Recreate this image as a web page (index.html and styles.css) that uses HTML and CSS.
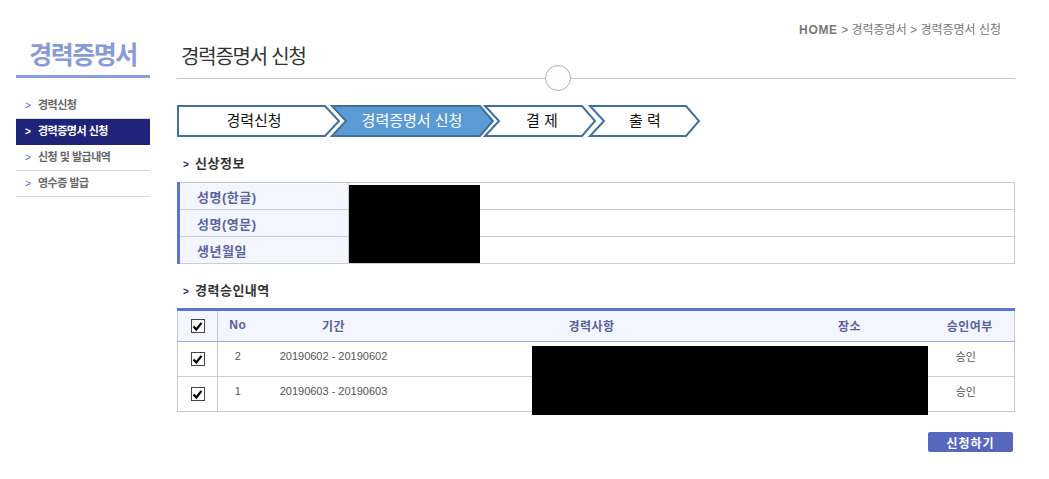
FILE: index.html
```html
<!DOCTYPE html>
<html lang="ko">
<head>
    <meta charset="UTF-8">
    <title>경력증명서 신청</title>
    <link rel="stylesheet" href="styles.css">
</head>
<body>
<div class="wrap">
    <!-- left menu -->
    <div class="side">
        <div class="side-title">경력증명서</div>
        <ul class="side-menu">
            <li><span class="arr">&gt;</span>경력신청</li>
            <li class="on"><span class="arr">&gt;</span>경력증명서 신청</li>
            <li><span class="arr">&gt;</span>신청 및 발급내역</li>
            <li><span class="arr">&gt;</span>영수증 발급</li>
        </ul>
    </div>

    <div class="main">
        <div class="location"><b>HOME</b> &gt; 경력증명서 &gt; 경력증명서 신청</div>
        <div class="page-title">
            경력증명서 신청
            <span class="circle"></span>
        </div>

        <svg class="steps" width="530" height="34" viewBox="0 0 530 34">
            <g stroke="#41709f" stroke-width="2" stroke-linejoin="miter">
                <polygon points="1,2 148,2 162,17 148,32 1,32" fill="#fff"/>
                <polygon points="155,2 303,2 316,17 303,32 155,32 169,17" fill="#5b9bd5"/>
                <polygon points="308,2 405,2 418,17 405,32 308,32 322,17" fill="#fff"/>
                <polygon points="413,2 509,2 522,17 509,32 413,32 427,17" fill="#fff"/>
            </g>
            <g class="step-txt" text-anchor="middle">
                <text x="77" y="22">경력신청</text>
                <text x="235" y="22" fill="#fff">경력증명서 신청</text>
                <text x="365" y="22">결 제</text>
                <text x="468" y="22">출 력</text>
            </g>
        </svg>

        <h3 class="sub"><span class="arr">&gt;</span>신상정보</h3>
        <div class="box">
            <table class="info">
                <tr><th>성명(한글)</th><td></td></tr>
                <tr><th>성명(영문)</th><td></td></tr>
                <tr><th>생년월일</th><td></td></tr>
            </table>
            <div class="mask mask1"></div>
        </div>

        <h3 class="sub sub2"><span class="arr">&gt;</span>경력승인내역</h3>
        <div class="box">
            <table class="list">
                <colgroup>
                    <col style="width:40px">
                    <col style="width:40px">
                    <col style="width:152px">
                    <col style="width:364px">
                    <col style="width:152px">
                    <col>
                </colgroup>
                <thead>
                    <tr>
                        <th class="cb"><span class="chk"><svg width="11" height="11" viewBox="0 0 11 11"><path d="M1.5 5.5 L4.3 8.5 L9.5 1.8" fill="none" stroke="#000" stroke-width="2.2"/></svg></span></th>
                        <th>No</th>
                        <th>기간</th>
                        <th>경력사항</th>
                        <th>장소</th>
                        <th>승인여부</th>
                    </tr>
                </thead>
                <tbody>
                    <tr>
                        <td class="cb"><span class="chk"><svg width="11" height="11" viewBox="0 0 11 11"><path d="M1.5 5.5 L4.3 8.5 L9.5 1.8" fill="none" stroke="#000" stroke-width="2.2"/></svg></span></td>
                        <td>2</td>
                        <td>20190602 - 20190602</td>
                        <td></td>
                        <td></td>
                        <td class="ok">승인</td>
                    </tr>
                    <tr>
                        <td class="cb"><span class="chk"><svg width="11" height="11" viewBox="0 0 11 11"><path d="M1.5 5.5 L4.3 8.5 L9.5 1.8" fill="none" stroke="#000" stroke-width="2.2"/></svg></span></td>
                        <td>1</td>
                        <td>20190603 - 20190603</td>
                        <td></td>
                        <td></td>
                        <td class="ok">승인</td>
                    </tr>
                </tbody>
            </table>
            <div class="mask mask2"></div>
        </div>

        <div class="btns">
            <button type="button" class="btn">신청하기</button>
        </div>
    </div>
</div>
</body>
</html>
```

FILE: styles.css
```css
body {
    margin: 0;
    background: #fff;
    font-family: "Liberation Sans", "Noto Sans CJK KR", sans-serif;
    color: #555;
}

.wrap {
    display: flex;
    padding-left: 16px;
}

/* left menu */
.side {
    width: 134px;
    padding-top: 38px;
}

.side-title {
    text-align: center;
    font-size: 25px;
    font-weight: bold;
    letter-spacing: -1.5px;
    color: #8a9ad9;
    line-height: 34px;
    padding-bottom: 3px;
    border-bottom: 3px solid #8c9ddc;
}

.side-menu {
    list-style: none;
    margin: 15px 0 0;
    padding: 0;
}

.side-menu li {
    height: 25px;
    line-height: 25px;
    border-bottom: 1px solid #d9d9d9;
    font-size: 11px;
    font-weight: bold;
    letter-spacing: -0.5px;
    color: #666;
    padding-left: 9px;
}

.side-menu li .arr {
    display: inline-block;
    width: 13px;
    color: #5c6bb8;
    font-size: 10px;
    font-weight: normal;
}

.side-menu li.on {
    background: #1f2478;
    color: #fff;
    border-bottom-color: #1f2478;
}

.side-menu li.on .arr {
    color: #fff;
    font-weight: bold;
}

/* main */
.main {
    width: 838px;
    margin-left: 27px;
}

.location {
    margin-top: 20px;
    height: 20px;
    line-height: 20px;
    text-align: right;
    padding-right: 14px;
    font-size: 12px;
    color: #777;
}

.location b {
    color: #777;
    letter-spacing: 0.7px;
}

.page-title {
    position: relative;
    padding: 5px 0 9px 4px;
    line-height: 24px;
    font-size: 20px;
    letter-spacing: -1.2px;
    color: #333;
    border-bottom: 1px solid #c8c8c8;
}

.circle {
    position: absolute;
    left: 368px;
    top: 25px;
    width: 24px;
    height: 24px;
    border: 1.5px solid #aeaecb;
    border-radius: 50%;
    background: #fff;
}

.steps {
    display: block;
    margin-top: 25px;
}

.step-txt {
    font-family: "Noto Sans CJK KR", sans-serif;
    font-size: 15px;
    fill: #111;
}

.sub {
    margin: 16px 0 0;
    height: 20px;
    line-height: 20px;
    font-size: 13px;
    color: #333;
    padding-left: 6px;
    letter-spacing: 0.5px;
}

.sub .arr {
    display: inline-block;
    width: 12px;
    font-size: 10px;
    color: #1f2478;
}

.sub2 {
    margin-top: 17px;
}

.box {
    position: relative;
    margin-top: 8px;
}

.mask {
    position: absolute;
    background: #000;
}

.mask1 {
    left: 172px;
    top: 3px;
    width: 131px;
    height: 78px;
}

.mask2 {
    left: 355px;
    top: 38px;
    width: 396px;
    height: 69px;
}

table {
    width: 100%;
    border-collapse: collapse;
}

.info {
    border-top: 1px solid #ccc;
    border-right: 1px solid #ccc;
}

.info th {
    width: 151px;
    height: 26px;
    padding: 0 0 0 17px;
    text-align: left;
    background: #f3f6fe;
    border-left: 3px solid #5c74d8;
    border-bottom: 1px solid #ccc;
    font-size: 13px;
    color: #5a64a0;
    letter-spacing: 0.5px;
}

.info td {
    border-left: 1px solid #ccc;
    border-bottom: 1px solid #ccc;
}

.list {
    margin-top: -1px;
    table-layout: fixed;
    border-top: 3px solid #5b74d6;
    border-left: 1px solid #ccc;
    border-right: 1px solid #ccc;
}

.list th {
    height: 28px;
    background: #f3f6fe;
    border-bottom: 1px solid #93ade5;
    font-size: 12px;
    color: #56609b;
    letter-spacing: 0.5px;
    padding: 0 0 2px;
}

.list td {
    height: 28px;
    border-bottom: 1px solid #ccc;
    text-align: center;
    font-size: 11px;
    color: #555;
    padding: 0 0 6px;
}

.list td.ok {
    padding-right: 8px;
}

.list .cb {
    border-right: 1px solid #ccc;
    padding: 0;
}

.list td.cb {
    height: 34px;
}

.chk {
    display: inline-block;
    width: 12px;
    height: 12px;
    border: 1px solid #444;
    background: #fff;
    vertical-align: middle;
    line-height: 0;
}

.chk svg {
    margin: 0.5px;
}

.btns {
    text-align: right;
    margin-top: 20px;
    padding-right: 2px;
}

.btn {
    width: 85px;
    height: 20px;
    padding: 0;
    border: none;
    border-radius: 2px;
    background: #5667bd;
    color: #fff;
    font-family: inherit;
    font-size: 12px;
    font-weight: bold;
    letter-spacing: 1px;
    cursor: pointer;
}
```
